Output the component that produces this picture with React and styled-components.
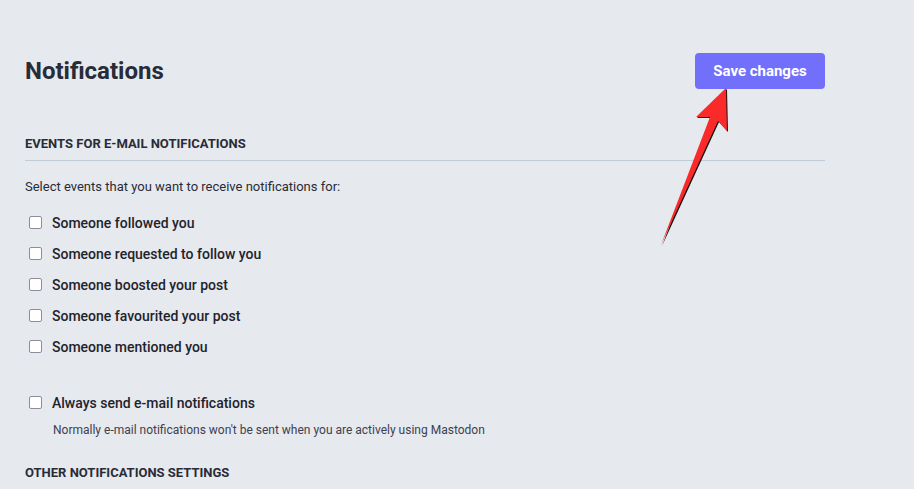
import React from 'react'
import styled, { createGlobalStyle } from 'styled-components'

const GlobalStyle = createGlobalStyle`
  html, body {
    margin: 0;
    padding: 0;
    background: #e6e9ee;
  }
  body {
    font-family: Roboto, "Liberation Sans", sans-serif;
    color: #282c37;
  }
`

// Styles
const Page = styled.div`
  position: relative;
  width: 914px;
  height: 489px;
  overflow: hidden;
  background: #e6e9ee;
`

const Content = styled.div`
  width: 800px;
  padding: 53px 0 0 25px;
`

const Header = styled.div`
  display: flex;
  justify-content: space-between;
  align-items: center;
  height: 36px;
`

const Title = styled.h1`
  margin: 0;
  font-size: 24px;
  font-weight: 700;
  color: #282c37;
`

const SaveButton = styled.button`
  width: 130px;
  height: 36px;
  border: 0;
  border-radius: 4px;
  background: #726ffa;
  color: #fff;
  font-family: Roboto, "Liberation Sans", sans-serif;
  font-size: 15px;
  font-weight: 700;
  cursor: pointer;
`

const SectionTitle = styled.h3`
  margin: ${props => props.top}px 0 0;
  padding-bottom: ${props => (props.ruled ? 8 : 0)}px;
  border-bottom: ${props => (props.ruled ? '1px solid #c0cdd9' : 'none')};
  font-size: 13px;
  font-weight: 700;
  text-transform: uppercase;
  line-height: 16px;
  color: #282c37;
`

const Intro = styled.p`
  margin: 17px 0 0;
  font-size: 13px;
  line-height: 17px;
  color: #282c37;
`

const List = styled.div`
  display: flex;
  flex-direction: column;
  gap: 14px;
  margin-top: ${props => props.top}px;
`

const Option = styled.label`
  display: flex;
  align-items: center;
  gap: 10px;
  padding-left: 4px;
  font-size: 14px;
  font-weight: 500;
  line-height: 17px;
  color: #1f232b;
`

const Box = styled.span`
  width: 11px;
  height: 11px;
  margin-top: -2px;
  border: 1.5px solid #8d8c9c;
  border-radius: 2px;
  background: #fff;
  flex: none;
`

const Hint = styled.div`
  margin: 10px 0 0 28px;
  font-size: 12px;
  line-height: 16px;
  color: #3d4150;
`

const Arrow = styled.svg`
  position: absolute;
  left: 650px;
  top: 80px;
`

const events = [
  'Someone followed you',
  'Someone requested to follow you',
  'Someone boosted your post',
  'Someone favourited your post',
  'Someone mentioned you',
]

export default function App() {
  return (
    <>
      <GlobalStyle />
      <Page>
        <Content>
          <Header>
            <Title>Notifications</Title>
            <SaveButton>Save changes</SaveButton>
          </Header>
          <SectionTitle top={47} ruled>Events for e-mail notifications</SectionTitle>
          <Intro>Select events that you want to receive notifications for:</Intro>
          <List top={20}>
            {events.map(e => (
              <Option key={e}>
                <Box />
                {e}
              </Option>
            ))}
          </List>
          <List top={39}>
            <Option>
              <Box />
              Always send e-mail notifications
            </Option>
          </List>
          <Hint>Normally e-mail notifications won't be sent when you are actively using Mastodon</Hint>
          <SectionTitle top={27}>Other notifications settings</SectionTitle>
        </Content>
        <Arrow width="100" height="180" viewBox="650 80 100 180">
          <path d="M662 246 L719 122 L728 132 L727 89 L697 118 L711 118 Z" fill="#111" />
          <path d="M661 245 L718 121 L727 131 L726 88 L696 117 L710 117 Z" fill="#fa2a2a" />
        </Arrow>
      </Page>
    </>
  )
}
